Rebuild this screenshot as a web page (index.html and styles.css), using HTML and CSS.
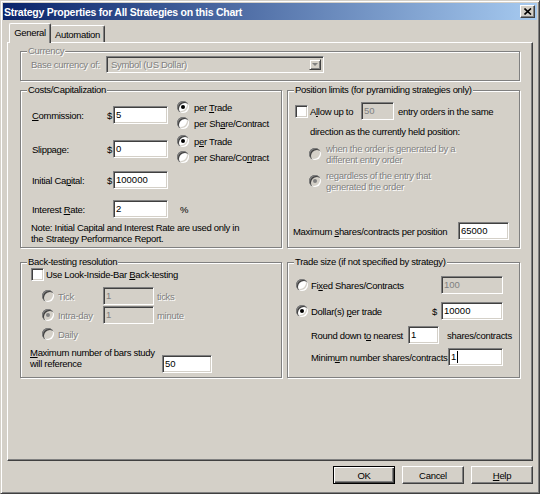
FILE: index.html
```html
<!DOCTYPE html>
<html>
<head>
<meta charset="utf-8">
<link rel="stylesheet" href="styles.css">
</head>
<body>
<div class="window">
  <div class="titlebar">
    <span class="title">Strategy Properties for All Strategies on this Chart</span>
    <span class="close"><svg width="8" height="7" viewBox="0 0 8 7"><path d="M0.5 0.5 L7 6.5 M7 0.5 L0.5 6.5" stroke="#000" stroke-width="1.6" fill="none"/></svg></span>
  </div>
  <div class="tabs">
    <div class="tab gen">General</div>
    <div class="tab auto">Automation</div>
  </div>
  <div class="panel">
    <div class="group currency">
      <div class="legend dis">Currency</div>
      <div class="row cur-row">
        <span class="dis w-base">Base currency of:</span>
        <div class="select"><span class="sel-text">Symbol (US Dollar)</span><span class="sel-btn"></span></div>
      </div>
    </div>
    <div class="grid">
      <div class="group costs">
        <div class="legend">Costs/Capitalization</div>
        <div class="row r-comm">
          <span class="w-c"><u>C</u>ommission:</span><span class="dollar">$</span><span class="tb w55">5</span>
          <div class="rcol">
            <div class="ritem"><span class="radio on"></span><span>per <u>T</u>rade</span></div>
            <div class="ritem"><span class="radio"></span><span>per Sh<u>a</u>re/Contract</span></div>
          </div>
        </div>
        <div class="row r-slip">
          <span class="w-c">Slippage:</span><span class="dollar">$</span><span class="tb w55">0</span>
          <div class="rcol">
            <div class="ritem"><span class="radio on"></span><span>p<u>e</u>r Trade</span></div>
            <div class="ritem"><span class="radio"></span><span>per Share/Co<u>n</u>tract</span></div>
          </div>
        </div>
        <div class="row r-cap">
          <span class="w-c">Initial Ca<u>p</u>ital:</span><span class="dollar">$</span><span class="tb w55">100000</span>
        </div>
        <div class="row r-int">
          <span class="w-c">Interest <u>R</u>ate:</span><span class="dollar"></span><span class="tb w55">2</span><span class="pct">%</span>
        </div>
        <div class="note">Note: Initial Capital and Interest Rate are used only in<br>the Strategy Performance Report.</div>
      </div>
      <div class="group pos">
        <div class="legend">Position limits (for pyramiding strategies only)</div>
        <div class="row r-allow">
          <span class="cb"></span><span class="w-allow">A<u>l</u>low up to</span><span class="tb dis w33">50</span><span class="after-allow">entry orders in the same</span>
        </div>
        <div class="dir">direction as the currently held position:</div>
        <div class="row r-opt1">
          <span class="radio dis"></span><span class="dis two">when the order is generated by a<br>different entry order</span>
        </div>
        <div class="row r-opt2">
          <span class="radio dis on"></span><span class="dis two">regardless of the entry that<br>generated the order</span>
        </div>
        <div class="row r-max">
          <span class="w-max">Maximum <u>s</u>hares/contracts per position</span><span class="tb w51">65000</span>
        </div>
      </div>
      <div class="group bt">
        <div class="legend">Back-testing resolution</div>
        <div class="row r-look">
          <span class="cb"></span><span class="cb-lbl">Use Look-Inside-Bar <u>B</u>ack-testing</span>
        </div>
        <div class="row r-tick">
          <span class="radio dis"></span><span class="dis w-tick">Tick</span><span class="tb dis w51">1</span><span class="dis unit">ticks</span>
        </div>
        <div class="row r-intra">
          <span class="radio dis on"></span><span class="dis w-tick">Intra-day</span><span class="tb dis w51">1</span><span class="dis unit">minute</span>
        </div>
        <div class="row r-daily">
          <span class="radio dis"></span><span class="dis daily">Daily</span>
        </div>
        <div class="row r-bars">
          <span class="two w-bars"><u>M</u>aximum number of bars study<br>will reference</span><span class="tb w50 bars-tb">50</span>
        </div>
      </div>
      <div class="group ts">
        <div class="legend">Trade size (if not specified by strategy)</div>
        <div class="row r-fixed">
          <span class="radio"></span><span class="w-fixed">Fi<u>x</u>ed Shares/Contracts</span><span class="tb dis w62">100</span>
        </div>
        <div class="row r-dollar">
          <span class="radio on"></span><span class="w-doll">Dollar(s) <u>p</u>er trade</span><span class="dollar2">$</span><span class="tb w62">10000</span>
        </div>
        <div class="row r-round">
          <span class="w-round">Round down t<u>o</u> nearest</span><span class="tb w31">1</span><span class="unit2">shares/contracts</span>
        </div>
        <div class="row r-min">
          <span class="w-min">Minim<u>u</u>m number shares/contracts:</span><span class="tb w55">1<span class="caret"></span></span>
        </div>
      </div>
    </div>
  </div>
  <div class="buttons">
    <div class="btn def">OK</div>
    <div class="btn">Cancel</div>
    <div class="btn"><u>H</u>elp</div>
  </div>
</div>
</body>
</html>
```
FILE: styles.css
```css
* { box-sizing: border-box; }
body {
  margin: 0;
  background: #d4d0c8;
  font-family: "Liberation Sans", Arial, sans-serif;
  font-size: 9.5px;
  letter-spacing: -0.3px;
  color: #000;
  white-space: nowrap;
}
u { text-decoration: underline; text-underline-offset: 1px; }
.window {
  width: 540px;
  height: 494px;
  background: #d4d0c8;
  border: 1px solid;
  border-color: #d4d0c8 #404040 #404040 #d4d0c8;
  box-shadow: inset 1px 1px 0 #fff, inset -1px -1px 0 #808080;
  padding: 2px;
  display: flex;
  flex-direction: column;
}
.titlebar {
  flex: none;
  height: 17px;
  background: linear-gradient(to right, #0a246a, #a6caf0);
  display: flex;
  align-items: center;
  justify-content: space-between;
  padding: 0 2px 0 1px;
}
.title { color: #fff; font-weight: bold; font-size: 10.5px; letter-spacing: -0.25px; }
.close {
  width: 15px;
  height: 13px;
  background: #d4d0c8;
  border: 1px solid;
  border-color: #fff #404040 #404040 #fff;
  box-shadow: inset -1px -1px 0 #808080;
  display: flex;
  align-items: center;
  justify-content: center;
}
.tabs {
  flex: none;
  display: flex;
  align-items: flex-end;
  height: 19px;
  margin: 3px 0 0 6px;
  position: relative;
  z-index: 1;
}
.tab {
  height: 17px;
  border: 1px solid;
  border-bottom: none;
  border-color: #fff #404040 #404040 #fff;
  box-shadow: inset -1px 0 0 #808080;
  border-radius: 2px 2px 0 0;
  display: flex;
  align-items: center;
  justify-content: center;
  background: #d4d0c8;
}
.tab.gen { width: 42px; height: 20px; margin-bottom: -1px; padding-bottom: 2px; }
.tab.auto { width: 54px; border-left: none; }
.panel {
  flex: none;
  margin-left: 4px;
  width: 526px;
  height: 419px;
  border: 1px solid;
  border-color: #fff #404040 #404040 #fff;
  box-shadow: inset -1px -1px 0 #808080;
  padding: 8px 12px 0 12px;
}
.group {
  border: 1px solid #808080;
  box-shadow: inset 1px 1px 0 #fff, 1px 1px 0 #fff;
}
.legend {
  height: 12px;
  line-height: 12px;
  margin: -7px 0 0 6px;
  padding: 0 1px;
  background: #d4d0c8;
  width: max-content;
}
.dis { color: #808080; text-shadow: 1px 1px 0 #fff; }
.row { display: flex; align-items: center; }
.tb {
  flex: none;
  height: 18px;
  border: 1px solid;
  border-color: #808080 #fff #fff #808080;
  box-shadow: inset 1px 1px 0 #404040, inset -1px -1px 0 #d4d0c8;
  background: #fff;
  padding: 0 1px 0 2px;
  line-height: 16px;
  display: flex;
  align-items: center;
  letter-spacing: 0;
}
.tb.dis { background: #d4d0c8; color: #808080; text-shadow: none; }
.w31 { width: 31px; }
.w33 { width: 33px; }
.w50 { width: 50px; }
.w51 { width: 51px; }
.w55 { width: 55px; }
.w62 { width: 62px; }
.caret { display: inline-block; width: 1px; height: 12px; background: #000; margin-left: 1px; }
.radio {
  flex: none;
  width: 12px;
  height: 12px;
  border-radius: 50%;
  background: #fff;
  box-shadow: inset 1px 1px 0 #808080, inset 2px 2px 0 #404040, inset -1px -1px 0 #fff, inset -2px -2px 0 #d4d0c8;
  display: flex;
  align-items: center;
  justify-content: center;
}
.radio.on::after { content: ""; width: 4px; height: 4px; border-radius: 50%; background: #000; }
.radio.dis { background: #d4d0c8; text-shadow: none; }
.radio.dis.on::after { background: #808080; }
.cb {
  flex: none;
  width: 13px;
  height: 13px;
  background: #fff;
  border: 1px solid;
  border-color: #808080 #fff #fff #808080;
  box-shadow: inset 1px 1px 0 #404040, inset -1px -1px 0 #d4d0c8;
}
.two { line-height: 11px; }

/* currency */
.currency { height: 30px; }
.cur-row { margin: -1px 0 0 10px; height: 17px; }
.w-base { width: 75px; }
.select {
  width: 218px;
  height: 17px;
  border: 1px solid;
  border-color: #808080 #fff #fff #808080;
  box-shadow: inset 1px 1px 0 #404040, inset -1px -1px 0 #d4d0c8;
  background: #d4d0c8;
  display: flex;
  align-items: center;
  justify-content: space-between;
  padding: 2px;
}
.sel-text { padding-left: 2px; color: #808080; text-shadow: 1px 1px 0 #fff; }
.sel-btn {
  width: 12px;
  height: 11px;
  border: 1px solid;
  border-color: #d4d0c8 #404040 #404040 #d4d0c8;
  box-shadow: inset 1px 1px 0 #fff, inset -1px -1px 0 #808080;
  display: flex;
  align-items: center;
  justify-content: center;
}
.sel-btn::before {
  content: "";
  border-left: 3px solid transparent;
  border-right: 3px solid transparent;
  border-top: 3px solid #808080;
}

.grid {
  display: grid;
  grid-template-columns: 262px 233px;
  grid-template-rows: 158px 116px;
  column-gap: 5px;
  row-gap: 14px;
  margin-top: 9px;
}

/* costs */
.w-c { width: 74px; }
.dollar { width: 7px; padding-left: 1px; }
.r-comm { margin: 3px 0 0 11px; height: 32px; }
.r-slip { margin: 2px 0 0 11px; height: 32px; }
.r-cap { margin: 6px 0 0 11px; height: 18px; }
.r-int { margin: 11px 0 0 11px; height: 18px; }
.rcol { margin-left: 9px; display: flex; flex-direction: column; }
.ritem { height: 16px; display: flex; align-items: center; gap: 5px; }
.pct { margin-left: 12px; }
.note { margin: 4px 0 0 10px; line-height: 11px; }

/* position limits */
.r-allow { margin: 6px 0 0 7px; height: 18px; }
.w-allow { width: 53px; padding-left: 2px; }
.after-allow { margin-left: 4px; }
.dir { margin: 6px 0 0 22px; height: 12px; line-height: 12px; }
.r-opt1 { margin: 5px 0 0 21px; height: 22px; }
.r-opt2 { margin: 5px 0 0 21px; height: 22px; }
.r-opt1 .two, .r-opt2 .two { margin-left: 5px; }
.r-max { margin: 30px 0 0 5px; height: 18px; }
.w-max { width: 165px; }

/* back-testing */
.r-look { margin: 0 0 0 10px; height: 13px; }
.cb-lbl { margin-left: 2px; }
.r-tick { margin: 6px 0 0 21px; height: 18px; }
.r-intra { margin: 1px 0 0 21px; height: 18px; }
.r-daily { margin: 3px 0 0 21px; height: 14px; }
.w-tick { width: 49px; padding-left: 4px; }
.daily { padding-left: 4px; }
.unit { margin-left: 3px; }
.r-bars { margin: 6px 0 0 9px; align-items: flex-start; }
.w-bars { width: 132px; }
.bars-tb { margin-top: 8px; }

/* trade size */
.r-fixed { margin: 8px 0 0 8px; height: 18px; }
.r-dollar { margin: 8px 0 0 8px; height: 18px; }
.w-fixed { width: 133px; padding-left: 3px; }
.w-doll { width: 124px; padding-left: 3px; }
.dollar2 { width: 9px; }
.r-round { margin: 6px 0 0 23px; height: 18px; }
.w-round { width: 97px; }
.unit2 { margin-left: 8px; }
.r-min { margin: 4px 0 0 23px; height: 18px; }
.w-min { width: 137px; }

.buttons {
  flex: none;
  display: flex;
  justify-content: flex-end;
  gap: 7px;
  margin-top: 5px;
  padding-right: 4px;
}
.btn {
  width: 62px;
  height: 18px;
  border: 1px solid;
  border-color: #fff #404040 #404040 #fff;
  box-shadow: inset -1px -1px 0 #808080;
  display: flex;
  align-items: center;
  justify-content: center;
}
.btn.def {
  border-color: #000;
  box-shadow: inset 1px 1px 0 #fff, inset -1px -1px 0 #404040, inset -2px -2px 0 #808080;
}
```
